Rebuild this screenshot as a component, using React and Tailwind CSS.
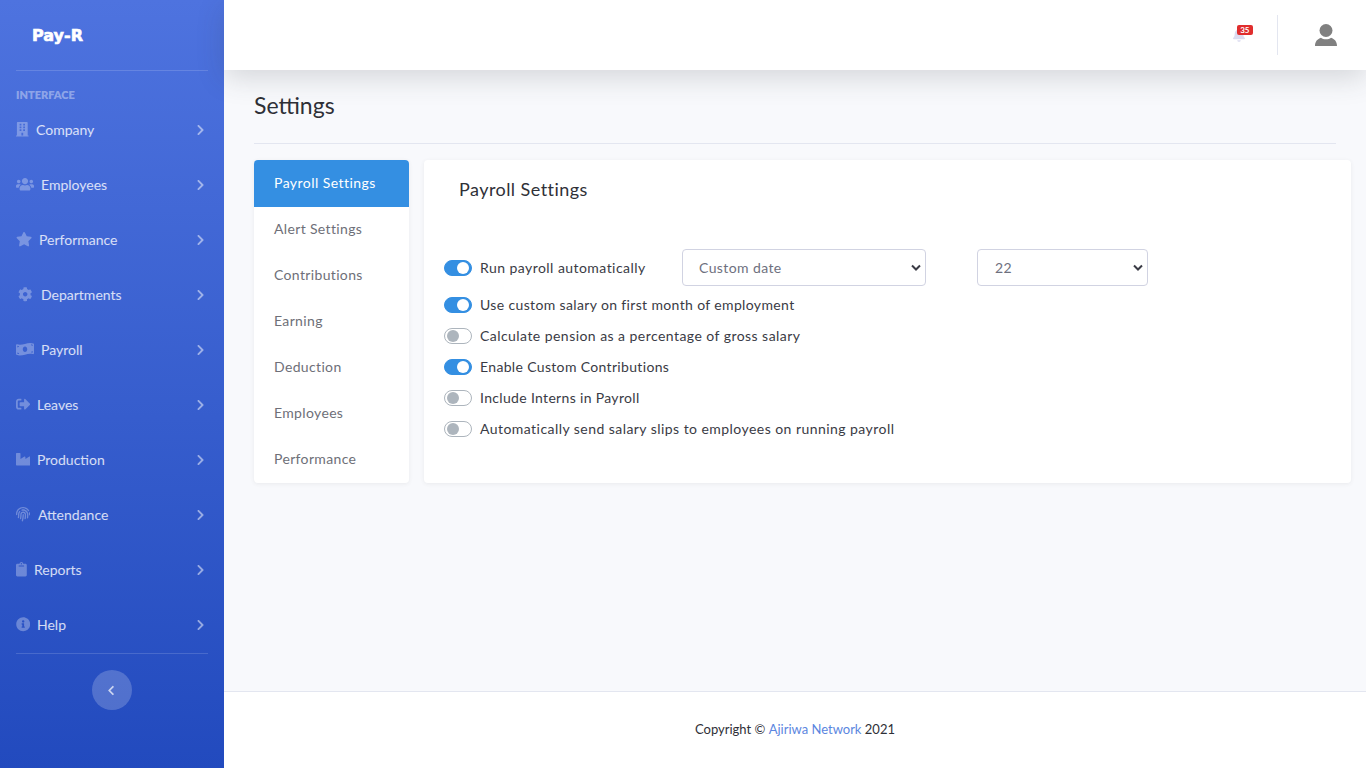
import React from "react";
import { FaBuilding, FaUsers, FaStar, FaCog, FaMoneyBillWave, FaSignOutAlt, FaIndustry, FaFingerprint, FaClipboard, FaInfoCircle, FaChevronRight, FaChevronLeft, FaBell } from "react-icons/fa";

const nav = [
  ["Company", FaBuilding, 20, 12.6],
  ["Employees", FaUsers, 25, 18],
  ["Performance", FaStar, 23, 16.2],
  ["Departments", FaCog, 25, 14.4],
  ["Payroll", FaMoneyBillWave, 25, 18],
  ["Leaves", FaSignOutAlt, 21, 14.4],
  ["Production", FaIndustry, 21, 14.4],
  ["Attendance", FaFingerprint, 22, 14.4],
  ["Reports", FaClipboard, 18, 10.8],
  ["Help", FaInfoCircle, 21, 14.4],
];
const tabs = ["Alert Settings", "Contributions", "Earning", "Deduction", "Employees", "Performance"];

function Toggle({ on }) {
  return (
    <span className={`flex h-4 w-7 shrink-0 items-center rounded-full border px-[2px] ${on ? "justify-end border-[#348fe2] bg-[#348fe2]" : "justify-start border-[#adb5bd] bg-white"}`}>
      <span className={`h-3 w-3 rounded-full ${on ? "bg-white" : "bg-[#adb5bd]"}`} />
    </span>
  );
}

function Row({ on, label, tracking = "tracking-[0.45px]" }) {
  return (
    <div className="flex h-[31px] items-center">
      <Toggle on={on} />
      <span className={`ml-2 text-[14px] text-[#3a3b45] ${tracking}`}>{label}</span>
    </div>
  );
}

function Select({ value, className }) {
  return (
    <div className={`relative flex h-[37px] items-center rounded border border-[#d1d3e2] bg-white text-[14px] tracking-[0.4px] text-[#6e707e] ${className}`}>
      {value}
      <svg className="absolute right-[4px] top-[14px]" width="10" height="8" viewBox="0 0 10 8"><path d="M1 1.5 5 5.5 9 1.5" fill="none" stroke="#3a3b45" strokeWidth="2" /></svg>
    </div>
  );
}

export default function App() {
  return (
    <div className="flex h-[768px] w-full overflow-hidden bg-[#f8f9fc] font-['Lato','Noto_Sans',sans-serif]">
      <aside className="flex h-full w-[224px] shrink-0 flex-col bg-gradient-to-b from-[#4e73df] to-[#224abe] px-4">
        <div className="flex h-[71px] shrink-0 items-center border-b border-white/15 pl-4 pt-[1px] font-['DejaVu_Sans',sans-serif] text-[16px] font-bold text-white [-webkit-text-stroke:0.6px_white]">Pay-R</div>
        <div className="mt-[16px] h-[15px] text-[11px] font-extrabold leading-[15px] text-white/40">INTERFACE</div>
        <nav className="flex flex-col">
          {nav.map(([label, Icon, gap, iw]) => (
            <div key={label} className="flex h-[55px] items-center">
              <span className={`flex items-center text-white/30 ${label === "Departments" ? "pl-[2px]" : ""}`} style={{ width: gap }}>
                <Icon className="h-[14.4px] shrink-0" style={{ width: iw }} />
              </span>
              <span className="text-[14px] text-white/80">{label}</span>
              <FaChevronRight className="ml-auto mr-[3px] mt-[1px] h-3 w-[9px] text-white/50" />
            </div>
          ))}
        </nav>
        <div className="mt-[1px] border-t border-white/15" />
        <div className="mt-4 flex justify-center">
          <div className="flex h-10 w-10 items-center justify-center rounded-full bg-white/20">
            <FaChevronLeft className="-ml-[2px] h-[11px] w-[8px] text-white/70" />
          </div>
        </div>
      </aside>

      <div className="flex min-w-0 flex-1 flex-col">
        <header className="relative z-10 flex h-[70px] shrink-0 items-center justify-end bg-white shadow-[0_8px_28px_rgba(58,59,69,0.18)]">
          <div className="relative mr-[32px] text-[#dcdcf0]">
            <FaBell className="h-[14px] w-[12px]" />
            <span className="absolute -right-[8px] -top-[3px] rounded-[2px] bg-[#e02d2d] px-[3.5px] text-[8px] font-bold leading-[10px] text-white">35</span>
          </div>
          <div className="h-[40px] w-px bg-[#e3e6f0]" />
          <svg className="ml-[37px] mr-[29px]" width="22" height="22" viewBox="0 0 22 22" fill="#808080">
            <circle cx="11" cy="6.5" r="6.5" />
            <path d="M0 22C0 17.5 2.5 15 6 13.8 8.5 15.8 13.5 15.8 16 13.8 19.5 15 22 17.5 22 22Z" />
          </svg>
        </header>

        <main className="flex-1 px-[30px]">
          <h1 className="mt-[20px] h-[30px] text-[23px] leading-[30px] text-[#2f3037]">Settings</h1>
          <div className="mt-[23px] border-t border-[#e3e6f0]" />
          <div className="-mr-[15px] mt-4 flex h-[323px] gap-[15px]">
            <div className="w-[155px] overflow-hidden rounded bg-white shadow-[0_1px_4px_rgba(58,59,69,0.08)]">
              <div className="flex h-[47px] items-center bg-[#348fe2] pb-[2px] pl-5 text-[14px] tracking-[0.45px] text-white">Payroll Settings</div>
              {tabs.map((t) => (
                <div key={t} className="flex h-[46px] items-center pb-[4px] pl-5 text-[14px] tracking-[0.35px] text-[#6e6f78]">{t}</div>
              ))}
            </div>
            <div className="flex-1 rounded bg-white px-5 shadow-[0_1px_4px_rgba(58,59,69,0.08)]">
              <div className="ml-[15px] mt-[16px] h-[26px] text-[18px] leading-[26px] tracking-[0.45px] text-[#2f3037]">Payroll Settings</div>
              <div className="mt-[47px] flex h-[37px] items-center">
                <Toggle on />
                <span className="ml-2 w-[202px] text-[14px] tracking-[0.45px] text-[#3a3b45]">Run payroll automatically</span>
                <Select value="Custom date" className="w-[244px] pl-4" />
                <Select value="22" className="ml-[51px] w-[171px] pl-[17px]" />
              </div>
              <div className="flex flex-col pt-[3px]">
                <Row on label="Use custom salary on first month of employment" tracking="tracking-[0.36px]" />
                <Row label="Calculate pension as a percentage of gross salary" />
                <Row on label="Enable Custom Contributions" tracking="tracking-[0.34px]" />
                <Row label="Include Interns in Payroll" tracking="tracking-[0.33px]" />
                <Row label="Automatically send salary slips to employees on running payroll" />
              </div>
            </div>
          </div>
        </main>

        <footer className="flex h-[77px] shrink-0 items-center justify-center border-t border-[#e3e6f0] bg-white pb-[1px] text-[13px] text-[#2f3037]">
          Copyright ©&nbsp;<span className="text-[#5b86e0]">Ajiriwa Network</span>&nbsp;2021
        </footer>
      </div>
    </div>
  );
}
